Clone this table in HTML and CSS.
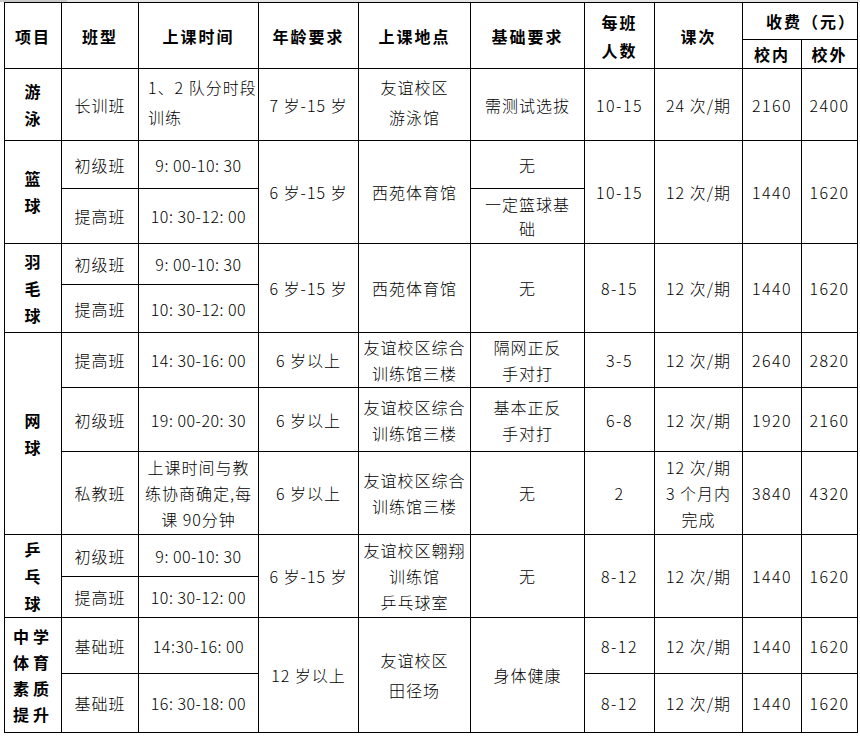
FILE: index.html
```html
<!DOCTYPE html>
<html lang="zh-CN">
<head>
<meta charset="utf-8">
<title>课程表</title>
<link rel="stylesheet" href="styles.css">
</head>
<body>
<div class="topbar"><div class="topbar-dark"></div><div class="topbar-light"></div></div>
<table class="sched">
  <colgroup>
    <col class="w57"><col class="w77"><col class="w120"><col class="w100"><col class="w112">
    <col class="w114"><col class="w70"><col class="w88"><col class="w59"><col class="w56">
  </colgroup>
  <thead>
    <tr class="h37">
      <th rowspan="2">项目</th>
      <th rowspan="2">班型</th>
      <th rowspan="2">上课时间</th>
      <th rowspan="2">年龄要求</th>
      <th rowspan="2">上课地点</th>
      <th rowspan="2">基础要求</th>
      <th rowspan="2" class="lh28">每班<br>人数</th>
      <th rowspan="2">课次</th>
      <th colspan="2" class="fee">收费（元）</th>
    </tr>
    <tr class="h29">
      <th>校内</th>
      <th>校外</th>
    </tr>
  </thead>
  <tbody>
    <tr class="h72 lh30">
      <td class="proj">游<br>泳</td>
      <td>长训班</td>
      <td class="left raise">1、2 队分时段<br>训练</td>
      <td>7 岁-15 岁</td>
      <td class="raise">友谊校区<br>游泳馆</td>
      <td>需测试选拔</td>
      <td class="num">10-15</td>
      <td>24 次/期</td>
      <td class="num">2160</td>
      <td class="num">2400</td>
    </tr>

    <tr class="h48">
      <td rowspan="2" class="proj">篮<br>球</td>
      <td>初级班</td>
      <td class="time">9: 00-10: 30</td>
      <td rowspan="2">6 岁-15 岁</td>
      <td rowspan="2">西苑体育馆</td>
      <td>无</td>
      <td rowspan="2" class="num">10-15</td>
      <td rowspan="2">12 次/期</td>
      <td rowspan="2" class="num">1440</td>
      <td rowspan="2" class="num">1620</td>
    </tr>
    <tr class="h55">
      <td>提高班</td>
      <td class="time">10: 30-12: 00</td>
      <td class="lh24">一定篮球基<br>础</td>
    </tr>

    <tr class="h41">
      <td rowspan="2" class="proj">羽<br>毛<br>球</td>
      <td>初级班</td>
      <td class="time">9: 00-10: 30</td>
      <td rowspan="2">6 岁-15 岁</td>
      <td rowspan="2">西苑体育馆</td>
      <td rowspan="2">无</td>
      <td rowspan="2" class="num">8-15</td>
      <td rowspan="2">12 次/期</td>
      <td rowspan="2" class="num">1440</td>
      <td rowspan="2" class="num">1620</td>
    </tr>
    <tr class="h48">
      <td>提高班</td>
      <td class="time">10: 30-12: 00</td>
    </tr>

    <tr class="h55">
      <td rowspan="3" class="proj">网<br>球</td>
      <td>提高班</td>
      <td class="time">14: 30-16: 00</td>
      <td>6 岁以上</td>
      <td>友谊校区综合<br>训练馆三楼</td>
      <td>隔网正反<br>手对打</td>
      <td class="num">3-5</td>
      <td>12 次/期</td>
      <td class="num">2640</td>
      <td class="num">2820</td>
    </tr>
    <tr class="h64">
      <td>初级班</td>
      <td class="time">19: 00-20: 30</td>
      <td>6 岁以上</td>
      <td>友谊校区综合<br>训练馆三楼</td>
      <td>基本正反<br>手对打</td>
      <td class="num">6-8</td>
      <td>12 次/期</td>
      <td class="num">1920</td>
      <td class="num">2160</td>
    </tr>
    <tr class="h83">
      <td>私教班</td>
      <td>上课时间与教<br>练协商确定,每<br>课 90分钟</td>
      <td>6 岁以上</td>
      <td>友谊校区综合<br>训练馆三楼</td>
      <td>无</td>
      <td class="num">2</td>
      <td>12 次/期<br>3 个月内<br>完成</td>
      <td class="num">3840</td>
      <td class="num">4320</td>
    </tr>

    <tr class="h42">
      <td rowspan="2" class="proj">乒<br>乓<br>球</td>
      <td>初级班</td>
      <td class="time">9: 00-10: 30</td>
      <td rowspan="2">6 岁-15 岁</td>
      <td rowspan="2">友谊校区翱翔<br>训练馆<br>乒乓球室</td>
      <td rowspan="2">无</td>
      <td rowspan="2" class="num">8-12</td>
      <td rowspan="2">12 次/期</td>
      <td rowspan="2" class="num">1440</td>
      <td rowspan="2" class="num">1620</td>
    </tr>
    <tr class="h41">
      <td>提高班</td>
      <td class="time">10: 30-12: 00</td>
    </tr>

    <tr class="h56">
      <td rowspan="2" class="proj wide">中学<br>体育<br>素质<br>提升</td>
      <td>基础班</td>
      <td class="time">14:30-16: 00</td>
      <td rowspan="2">12 岁以上</td>
      <td rowspan="2" class="lh30">友谊校区<br>田径场</td>
      <td rowspan="2">身体健康</td>
      <td class="num">8-12</td>
      <td>12 次/期</td>
      <td class="num">1440</td>
      <td class="num">1620</td>
    </tr>
    <tr class="h59">
      <td>基础班</td>
      <td class="time">16: 30-18: 00</td>
      <td class="num">8-12</td>
      <td>12 次/期</td>
      <td class="num">1440</td>
      <td class="num">1620</td>
    </tr>
  </tbody>
</table>
</body>
</html>
```

FILE: styles.css
```css
html, body {
  margin: 0;
  padding: 0;
  background: #ffffff;
}

body {
  font-family: "Noto Sans CJK SC", "Noto Sans", sans-serif;
  font-size: 16px;
  color: #000;
}

.topbar {
  display: flex;
  height: 2px;
}
.topbar-dark {
  width: 67px;
  background: #c8c8c8;
}
.topbar-light {
  flex: 1;
  background: #e4e4e4;
}

.sched {
  border-collapse: collapse;
  table-layout: fixed;
  width: 854px;
  margin: 0 0 0 4px;
  border: 1px solid #000;
}

.sched th,
.sched td {
  border: 1px solid #000;
  padding: 0 2px;
  text-align: center;
  vertical-align: middle;
  line-height: 26px;
  letter-spacing: 1px;
  white-space: nowrap;
  overflow: hidden;
}

.sched td {
  font-weight: 300;
}

.sched th {
  font-weight: 700;
  letter-spacing: 2px;
}

.sched .num {
  letter-spacing: 1.5px;
}

.sched .time {
  letter-spacing: 0.5px;
}

.w57 { width: 57px; }
.w77 { width: 77px; }
.w120 { width: 120px; }
.w100 { width: 100px; }
.w112 { width: 112px; }
.w114 { width: 114px; }
.w70 { width: 70px; }
.w88 { width: 88px; }
.w59 { width: 59px; }
.w56 { width: 56px; }

.h29 { height: 29px; }
.h37 { height: 37px; }
.h41 { height: 41px; }
.h42 { height: 42px; }
.h48 { height: 48px; }
.h55 { height: 55px; }
.h56 { height: 56px; }
.h59 { height: 59px; }
.h64 { height: 64px; }
.h72 { height: 72px; }
.h83 { height: 83px; }

.sched .lh28 { line-height: 28px; }
.sched .lh24 { line-height: 24px; }
.lh30 td, .sched .lh30 { line-height: 30px; }

.sched .raise {
  padding-bottom: 6px;
}

.sched .fee {
  text-align: right;
  padding-right: 1px;
}

.sched .left {
  text-align: left;
  padding-left: 9px;
}

.sched .proj {
  font-weight: 700;
  line-height: 27px;
}

.sched .proj.wide {
  letter-spacing: 4px;
  line-height: 26px;
}
```
